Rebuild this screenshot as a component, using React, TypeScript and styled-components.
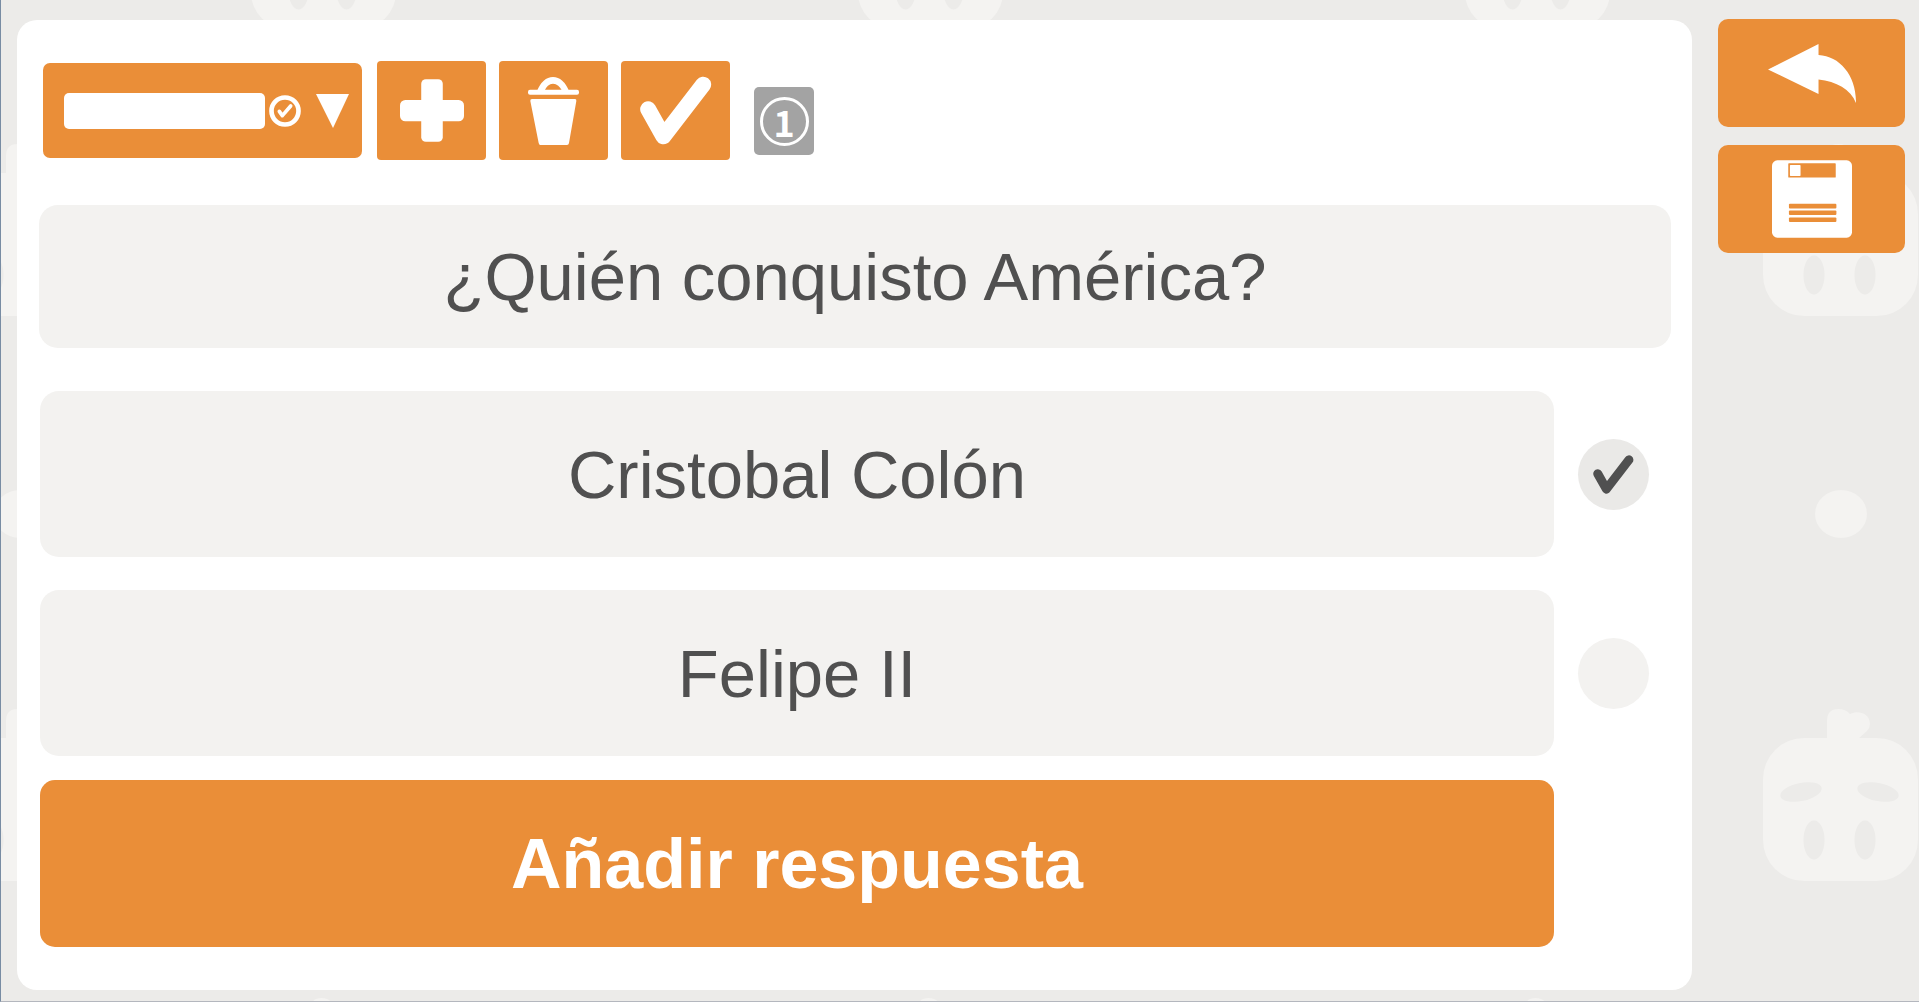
import React, { useState } from "react";
import styled, { createGlobalStyle, ThemeProvider } from "styled-components";

const theme = {
  orange: "#ea8e38",
  backdrop: "#ecebe9",
  shape: "#f4f3f1",
  field: "#f3f2f0",
  picked: "#eae9e7",
  ink: "#505050",
  grey: "#a3a3a3",
};

const GlobalStyle = createGlobalStyle`
  *, *::before, *::after { box-sizing: border-box; }
  body { margin: 0; background: ${theme.backdrop}; }
  button, input, select { font: inherit; color: inherit; margin: 0; }
`;

const Page = styled.div`
  position: relative;
  display: flex;
  align-items: stretch;
  gap: 26px;
  min-height: 100vh;
  padding: 20px 14px 11px 16px;
  border-left: 1px solid #788ca3;
  border-bottom: 1px solid #b4b7be;
  font-family: "Liberation Sans", Arial, sans-serif;
  font-size: 67px;
  color: ${(p) => p.theme.ink};
`;

const Backdrop = styled.svg`
  position: absolute;
  inset: 0;
  width: 100%;
  height: 100%;
`;

const Panel = styled.main`
  position: relative;
  flex: 1;
  min-width: 0;
  padding: 41px 21px 43px 22px;
  border-radius: 20px;
  background: #fff;
`;

const Toolbar = styled.div`
  display: flex;
  align-items: center;
  gap: 13px;
  padding-left: 4px;
  margin-bottom: 45px;
`;

const Picker = styled.label`
  display: flex;
  align-items: center;
  width: 319px;
  height: 95px;
  margin-right: 2px;
  padding: 0 13px 0 21px;
  border-radius: 7px;
  background: ${(p) => p.theme.orange};
`;

const PickerSelect = styled.select`
  appearance: none;
  flex: 1;
  min-width: 0;
  height: 36px;
  margin-right: 4px;
  padding: 0 8px;
  border: 0;
  border-radius: 5px;
  background: #fff;
  font-size: 20px;
`;

const PickerArrow = styled.svg`
  margin-left: 15px;
`;

const OrangeButton = styled.button`
  display: flex;
  align-items: center;
  justify-content: center;
  padding: 0;
  border: 0;
  background: ${(p) => p.theme.orange};
  color: #fff;
  cursor: pointer;
`;

const ToolButton = styled(OrangeButton)`
  width: 109px;
  height: 99px;
  border-radius: 4px;
`;

const SideButton = styled(OrangeButton)`
  width: 100%;
  height: 108px;
  border-radius: 10px;
`;

const Counter = styled.div`
  display: flex;
  align-items: center;
  justify-content: center;
  align-self: flex-end;
  width: 60px;
  height: 68px;
  margin: 0 0 5px 11px;
  border-radius: 5px;
  background: ${(p) => p.theme.grey};
`;

const CounterRing = styled.span`
  display: flex;
  align-items: center;
  justify-content: center;
  width: 49px;
  height: 49px;
  border: 3px solid #fff;
  border-radius: 50%;
  color: #fff;
  font: bold 36px/43px "Noto Sans CJK SC", "DejaVu Sans", sans-serif;
`;

const TextField = styled.input<{ $height: number }>`
  display: block;
  width: 100%;
  min-width: 0;
  height: ${(p) => p.$height}px;
  padding: 0 20px;
  border: 0;
  border-radius: 19px;
  background: ${(p) => p.theme.field};
  text-align: center;
`;

const Answers = styled.div`
  display: grid;
  grid-template-columns: minmax(0, 1fr) 71px;
  column-gap: 24px;
  align-items: center;
  margin-top: 43px;
  padding: 0 22px 0 1px;
`;

const AnswerRow = styled.div`
  display: grid;
  grid-column: 1 / -1;
  grid-template-columns: subgrid;
  align-items: center;
  margin-bottom: 33px;

  &:last-of-type {
    margin-bottom: 24px;
  }
`;

const CorrectMark = styled.label`
  display: grid;
  place-items: center;
  cursor: pointer;

  > * {
    grid-area: 1 / 1;
  }

  svg {
    pointer-events: none;
  }
`;

const CorrectRadio = styled.input`
  appearance: none;
  width: 71px;
  height: 71px;
  border-radius: 50%;
  background: ${(p) => p.theme.field};
  cursor: pointer;

  &:checked {
    background: ${(p) => p.theme.picked};
  }
`;

const AddButton = styled(OrangeButton)`
  height: 167px;
  border-radius: 15px;
  font-weight: bold;
  font-size: 70px;
`;

const Side = styled.aside`
  position: relative;
  display: flex;
  flex-direction: column;
  gap: 18px;
  width: 187px;
  margin-top: -1px;
`;

/* Head of the mascot, centred on x = 0 with the tip of the hair at y = 0 */
const Mascot = ({ transform }: { transform: string }) => (
  <g transform={transform}>
    <g fill={theme.shape}>
      <rect x="-77" y="29" width="155" height="143" rx="41" />
      <path d="M-13 32V12Q-13 0 -2 0Q6 0 10 5C18 1 30 4 30 15Q30 19 27 22L18 30V32Z" />
    </g>
    <g fill={theme.backdrop}>
      <ellipse cx="-39" cy="83" rx="21" ry="9" transform="rotate(-12 -39 83)" />
      <ellipse cx="38" cy="83" rx="21" ry="9" transform="rotate(12 38 83)" />
      <ellipse cx="-26" cy="131" rx="10.5" ry="19.5" />
      <ellipse cx="25" cy="131" rx="10.5" ry="19.5" />
    </g>
  </g>
);

const CheckIcon = ({ width, height, color }: { width: number; height: number; color: string }) => (
  <svg width={width} height={height} viewBox="0 0 216 208" aria-hidden="true">
    <path
      d="M24 100L70 182L190 26"
      fill="none"
      stroke={color}
      strokeWidth="48"
      strokeLinecap="round"
      strokeLinejoin="round"
    />
  </svg>
);

const RoundCheckIcon = () => (
  <svg width="32" height="32" viewBox="0 0 96 96" fill="none" stroke="#fff" aria-hidden="true">
    <circle cx="48" cy="48" r="40.5" strokeWidth="14" />
    <path d="M31 49L40 62L65 33" strokeWidth="11" strokeLinecap="round" strokeLinejoin="round" />
  </svg>
);

const PlusIcon = () => (
  <svg width="64" height="63" viewBox="0 0 193 189" fill="#fff" aria-hidden="true">
    <rect x="64" y="0" width="65" height="189" rx="14" />
    <rect x="0" y="63" width="193" height="64" rx="16" />
  </svg>
);

const BinIcon = () => (
  <svg width="51" height="68" viewBox="0 0 153 204" fill="#fff" aria-hidden="true">
    <path d="M26 44Q44 0 75 0Q106 0 124 44H104Q92 20 75 20Q58 20 48 44Z" />
    <rect x="0" y="38" width="153" height="15" rx="6" />
    <path d="M12 66H141Q146 66 145 72L123 198Q122 204 117 204H37Q33 204 32 198L7 72Q6 66 12 66Z" />
  </svg>
);

const BackIcon = () => (
  <svg width="88" height="59" viewBox="0 0 263 176" fill="#fff" aria-hidden="true">
    <path d="M0 76L151 0V33C215 36 264 95 263 176C247 135 204 112 151 106V149Z" />
  </svg>
);

const SaveIcon = () => (
  <svg width="80" height="78" viewBox="0 0 241 233" aria-hidden="true">
    <rect width="241" height="233" rx="16" fill="#fff" />
    <g fill={theme.orange}>
      <rect x="49" y="9" width="143" height="43" rx="2" />
      <rect x="51" y="131" width="143" height="14" rx="3" />
      <rect x="51" y="151" width="143" height="14" rx="3" />
      <rect x="51" y="172" width="143" height="14" rx="3" />
    </g>
    <rect x="54" y="14" width="32" height="33" rx="2" fill="#fff" />
  </svg>
);

const initialAnswers = ["Cristobal Colón", "Felipe II"];

export default function App() {
  const [question, setQuestion] = useState("¿Quién conquisto América?");
  const [answers, setAnswers] = useState(initialAnswers);
  const [correct, setCorrect] = useState(0);

  const editAnswer = (index: number, text: string) =>
    setAnswers(answers.map((answer, i) => (i === index ? text : answer)));

  return (
    <ThemeProvider theme={theme}>
      <GlobalStyle />
      <Page>
        <Backdrop aria-hidden="true">
          <defs>
            <pattern id="mascots" width="607" height="565" patternUnits="userSpaceOnUse" patternTransform="translate(-133 101)">
              <rect width="607" height="565" fill={theme.backdrop} />
              <Mascot transform="translate(151 43)" />
              <ellipse cx="152" cy="413" rx="26" ry="24" fill={theme.shape} />
              <Mascot transform="translate(455 332) scale(.94)" />
            </pattern>
          </defs>
          <rect width="100%" height="100%" fill="url(#mascots)" />
        </Backdrop>

        <Panel>
          <Toolbar>
            <Picker>
              <PickerSelect aria-label="Pregunta" defaultValue="">
                <option value="" aria-label="Sin título" />
              </PickerSelect>
              <RoundCheckIcon />
              <PickerArrow width="33" height="34" viewBox="0 0 33 34" aria-hidden="true">
                <path d="M0 0H33L17 34Z" fill="#fff" />
              </PickerArrow>
            </Picker>
            <ToolButton type="button" aria-label="Nueva pregunta">
              <PlusIcon />
            </ToolButton>
            <ToolButton type="button" aria-label="Borrar pregunta">
              <BinIcon />
            </ToolButton>
            <ToolButton type="button" aria-label="Validar pregunta">
              <CheckIcon width={72} height={69} color="#fff" />
            </ToolButton>
            <Counter>
              <CounterRing>1</CounterRing>
            </Counter>
          </Toolbar>

          <TextField
            $height={143}
            aria-label="Enunciado"
            value={question}
            onChange={(e) => setQuestion(e.target.value)}
          />

          <Answers>
            {answers.map((answer, index) => (
              <AnswerRow key={index}>
                <TextField
                  $height={166}
                  aria-label={`Respuesta ${index + 1}`}
                  value={answer}
                  onChange={(e) => editAnswer(index, e.target.value)}
                />
                <CorrectMark>
                  <CorrectRadio
                    type="radio"
                    name="correct"
                    aria-label={`Respuesta ${index + 1} correcta`}
                    checked={correct === index}
                    onChange={() => setCorrect(index)}
                  />
                  {correct === index && <CheckIcon width={41} height={39} color={theme.ink} />}
                </CorrectMark>
              </AnswerRow>
            ))}
            <AddButton type="button" onClick={() => setAnswers([...answers, ""])}>
              Añadir respuesta
            </AddButton>
          </Answers>
        </Panel>

        <Side>
          <SideButton type="button" aria-label="Volver">
            <BackIcon />
          </SideButton>
          <SideButton type="button" aria-label="Guardar">
            <SaveIcon />
          </SideButton>
        </Side>
      </Page>
    </ThemeProvider>
  );
}
